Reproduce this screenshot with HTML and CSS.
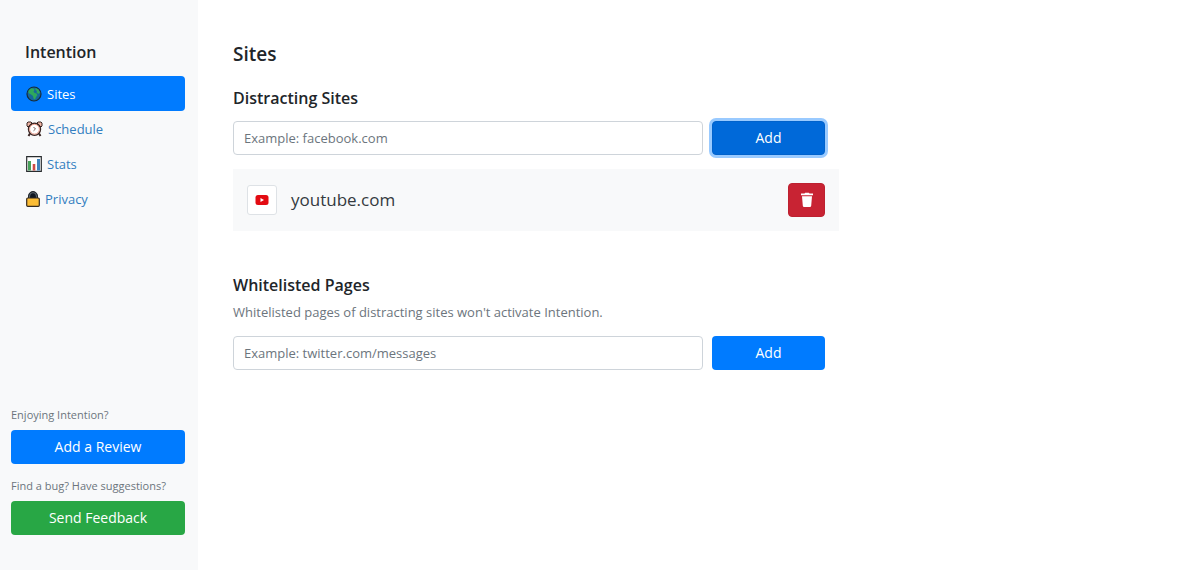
FILE: index.html
```html
<!DOCTYPE html>
<html lang="en">
<head>
<meta charset="utf-8">
<meta name="viewport" content="width=device-width, initial-scale=1">
<title>Intention</title>
<link rel="stylesheet" href="styles.css">
</head>
<body>
<div class="app">
  <aside class="sidebar">
    <h1 class="brand">Intention</h1>
    <nav class="nav">
      <a class="nav-link active" href="#sites">
        <svg width="16" height="16" viewBox="0 0 16 16" aria-hidden="true"><circle cx="8" cy="8" r="7" fill="#17679b" stroke="#172b38" stroke-width="1.2"/><path d="M2.500 4.500 5 2.200l2.500.3 1 1.500-1 1.500.8 1.300 2.200.7 1 1.500-1.500 2-1 2.500-1.500-1-.5-2.500L5 8.500 2.500 7zM9.500 2l3 1.500 1.500 3-1.500 1.500-2-1.500.5-1.500-1.500-1z" fill="#2ea85c"/></svg>
        <span>Sites</span></a>
      <a class="nav-link" href="#schedule">
        <svg width="17" height="16" viewBox="0 0 17 16" aria-hidden="true"><path d="M4 12.500 2.500 15M13 12.500l1.500 2.500" stroke="#3b2725" stroke-width="2"/><path d="M1 5V2l1-1h3l1 1-4 4zM16 5V2l-1-1h-3l-1 1 4 4z" fill="#f1b6a5" stroke="#3b2725"/><circle cx="8.500" cy="8.200" r="6" fill="#fff" stroke="#3b2725" stroke-width="1.400"/><circle cx="8.500" cy="8.200" r="4.900" fill="none" stroke="#ec9d8b"/><path d="m7.500 6 2 2-2 1.800" fill="none" stroke="#755e5b"/></svg>
        <span>Schedule</span></a>
      <a class="nav-link" href="#stats">
        <svg width="16" height="16" viewBox="0 0 16 16" aria-hidden="true"><path d="M.7.700h14.600v14.600H.7z" fill="#fff" stroke="#282c2e" stroke-width="1.200"/><path d="M2 5h3v9.500H2z" fill="#48a15a"/><path d="M6.700 8h2.600v6.500H6.700z" fill="#cc4b45"/><path d="M11 3h3v11.500h-3z" fill="#3e83bd"/></svg>
        <span>Stats</span></a>
      <a class="nav-link" href="#privacy">
        <svg width="14" height="16" viewBox="0 0 14 16" aria-hidden="true"><path d="M2.500 8V5a4.500 4.500 0 0 1 9 0v3z" fill="#111923" stroke="#22272b"/><path d="M3.600 7V5a3.400 3.400 0 0 1 6.800 0v2" fill="none" stroke="#77818a" stroke-width=".8"/><rect x=".7" y="7" width="12.600" height="8.300" rx="1" fill="#fcbd35" stroke="#352b20" stroke-width="1.200"/></svg>
        <span>Privacy</span></a>
    </nav>
    <div class="support">
      <div class="support-item">
        <p class="caption">Enjoying Intention?</p>
        <button class="btn primary" type="button">Add a Review</button>
      </div>
      <div class="support-item">
        <p class="caption">Find a bug? Have suggestions?</p>
        <button class="btn success" type="button">Send Feedback</button>
      </div>
    </div>
  </aside>
  <main class="content">
    <h2 class="page-title">Sites</h2>
    <section class="section">
      <h3 class="section-title"><label for="site">Distracting Sites</label></h3>
      <form class="add-form">
        <input class="field" id="site" type="text" placeholder="Example: facebook.com">
        <button class="btn primary focused" type="button">Add</button>
      </form>
      <ul class="site-list">
        <li class="site">
          <span class="favicon"><svg width="14" height="10" viewBox="0 0 14 10" aria-hidden="true"><rect x=".5" width="13" height="10" rx="2.500" fill="#e30b12"/><path d="M5.500 3v4L9 5z" fill="#fff"/></svg></span>
          <span class="site-name">youtube.com</span>
          <button class="btn danger" type="button" aria-label="Delete youtube.com"><svg width="14" height="16" viewBox="0 0 14 16" aria-hidden="true"><path d="M1 1.500h3.500L5.200.700h3.600l.7.800H13v1.700H1zM2 4.200h10l-.8 9.500q-.1 1.300-1.400 1.300H4.200q-1.300 0-1.400-1.300z" fill="#fff"/></svg></button>
        </li>
      </ul>
    </section>
    <section class="section">
      <h3 class="section-title"><label for="page">Whitelisted Pages</label></h3>
      <p class="help">Whitelisted pages of distracting sites won't activate Intention.</p>
      <form class="add-form">
        <input class="field" id="page" type="text" placeholder="Example: twitter.com/messages">
        <button class="btn primary" type="button">Add</button>
      </form>
    </section>
  </main>
</div>
</body>
</html>
```
FILE: styles.css
```css
* { box-sizing: border-box; }
body {
  margin: 0;
  color: #212529;
  background: #fff;
  font: 14px/20px "Segoe UI", "Open Sans", sans-serif;
}
h1, h2, h3, p, ul { margin: 0; padding: 0; }
h1, h2, h3 { font-weight: 600; }
.app { display: flex; min-height: 100vh; }
.sidebar {
  display: flex;
  flex: 0 0 198px;
  flex-direction: column;
  padding: 40px 13px 35px 11px;
  background: #f8f9fa;
}
.brand { padding-left: 14px; font-size: 16px; line-height: 24px; }
.nav { display: flex; flex-direction: column; margin-top: 12px; }
.nav-link {
  display: flex;
  align-items: center;
  gap: 5px;
  height: 35px;
  padding: 0 15px;
  border-radius: 4px;
  color: #337ec0;
  font-size: 13px;
  text-decoration: none;
}
.nav-link.active { color: #fff; background: #007bff; }
.support { display: grid; gap: 13px; margin-top: auto; }
.support-item { display: grid; gap: 6px; }
.caption { color: #6c757d; font-size: 11px; line-height: 18px; }
.btn {
  display: flex;
  align-items: center;
  justify-content: center;
  height: 34px;
  padding: 0 10px;
  border: 1px solid transparent;
  border-radius: 4px;
  color: #fff;
  font: inherit;
  cursor: pointer;
}
.primary { background: #007bff; }
.success { background: #28a745; }
.danger { width: 37px; padding: 0; background: #c82333; border-color: #bd2130; }
.primary.focused {
  background: #0069d9;
  border-color: #0062cc;
  box-shadow: 0 0 0 3px #99caff;
}
.content { flex: 1; max-width: 641px; padding: 40px 0 40px 35px; }
.page-title { font-size: 19px; line-height: 28px; }
.section { margin-top: 18px; }
.section + .section { margin-top: 42px; }
.section-title { font-size: 16px; line-height: 24px; }
.add-form {
  display: grid;
  grid-template-columns: 1fr 113px;
  gap: 9px;
  margin: 11px 14px 0 0;
}
.field {
  width: 100%;
  height: 34px;
  padding: 0 10px;
  border: 1px solid #ced4da;
  border-radius: 4px;
  color: #495057;
  background: #fff;
  font: inherit;
  font-size: 13px;
}
.field::placeholder { color: #6c757d; opacity: 1; }
.site-list { margin-top: 14px; list-style: none; }
.site {
  display: flex;
  align-items: center;
  padding: 14px;
  background: #f8f9fa;
}
.favicon {
  display: flex;
  align-items: center;
  justify-content: center;
  width: 30px;
  height: 30px;
  border: 1px solid #dee2e6;
  border-radius: 3px;
  background: #fff;
}
.site-name { flex: 1; margin-left: 14px; color: #343a40; font-size: 17px; }
.help { margin-top: 5px; color: #6c757d; font-size: 13px; }
.help + .add-form { margin-top: 14px; }
```
